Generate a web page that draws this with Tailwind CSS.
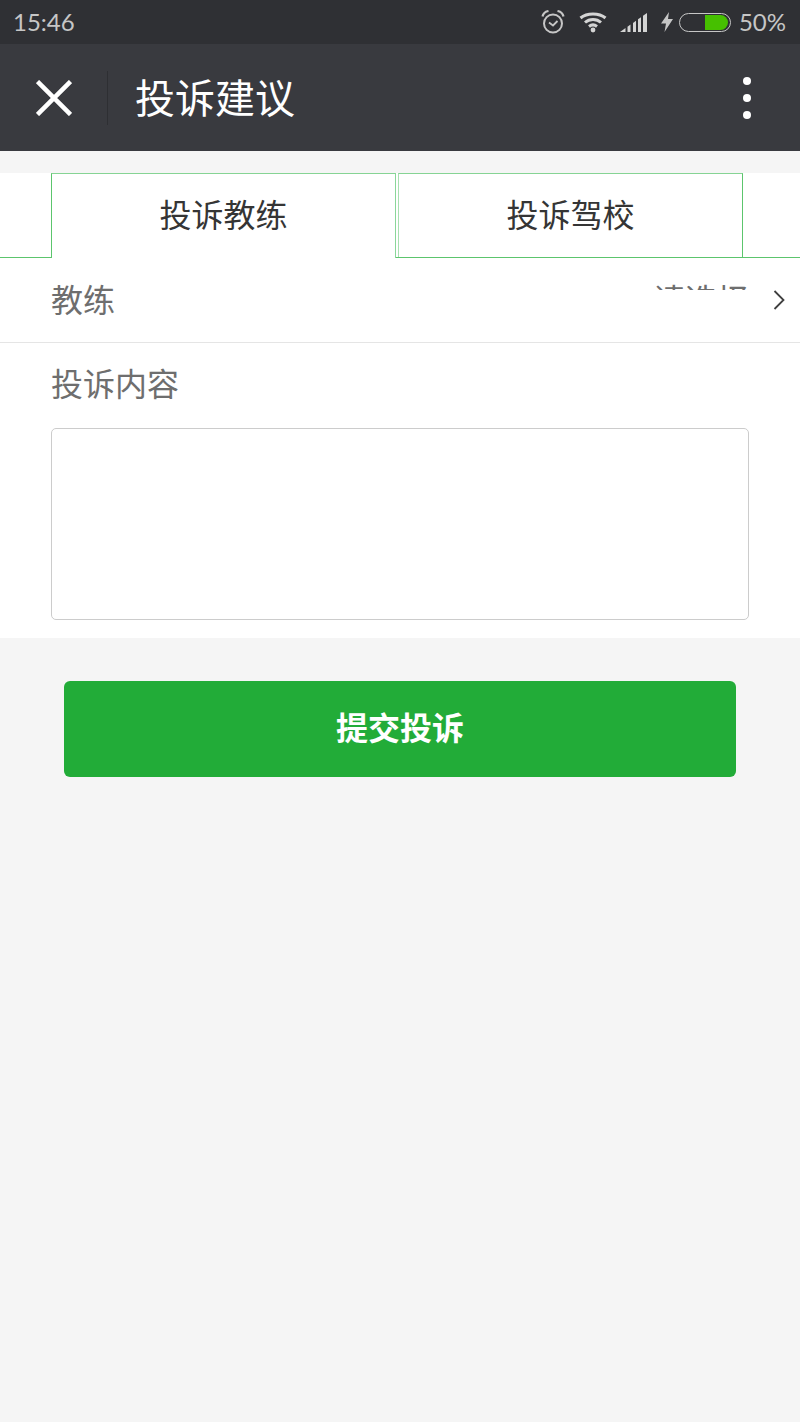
<!DOCTYPE html>
<html lang="zh">
<head>
<meta charset="utf-8">
<script src="https://cdn.jsdelivr.net/npm/@tailwindcss/browser@4"></script>
</head>
<body class="m-0 h-[1422px] w-[800px] overflow-hidden bg-[#f5f5f5] font-['Noto_Sans_CJK_SC','Noto_Sans',sans-serif]">
<div class="flex h-[44px] items-center justify-between bg-[#2f3034] pl-[13px] pr-[14px] font-['Lato','Noto_Sans_CJK_SC',sans-serif] text-[24px] leading-none text-[#c6c6c6]">
  <span>15:46</span>
  <div class="flex items-center">
    <svg class="h-[24px] w-[24px]" viewBox="0 0 24 24" fill="none" stroke="#c6c6c6" stroke-width="2"><circle cx="12" cy="13.500" r="9"/><path d="M8 12.500l4 3 4.500-4.500" stroke-width="1.800"/><path d="M1.500 6.500Q2.500 2 7.500 1M22.500 6.500Q21.500 2 16.500 1" stroke-width="2.200"/></svg>
    <svg class="ml-[14px] h-[24px] w-[28px]" viewBox="0 0 28 24" fill="none" stroke="#d4d4d4" stroke-width="3"><path d="M1.500 8C8 2.500 20 2.500 26.500 8"/><path d="M6 12.500C10.500 8.500 17.500 8.500 22 12.500"/><path d="M10 16.500C12.500 14.500 15.500 14.500 18 16.500"/><circle cx="14" cy="20" r="2.400" fill="#d4d4d4" stroke="none"/></svg>
    <svg class="ml-[13px] h-[19px] w-[27px]" viewBox="0 0 27 19" fill="#d4d4d4"><path d="M0 19L5.500 15.100V19zM7.500 13.700L10.500 11.600V19H7.500zM13 9.900L16 7.700V19H13zM18 6.300L21 4.200V19H18zM23 2.800L27 0V19H23z"/></svg>
    <svg class="ml-[14px] h-[20px] w-[12px]" viewBox="0 0 12 20" fill="#c6c6c6"><path d="M8 0L0 11.500H5L3.500 20 12 7H7z"/></svg>
    <div class="ml-[6px] flex h-[19px] w-[52px] justify-end rounded-full border-[1.5px] border-[#c6c6c6] py-[1px] pr-[2px]">
      <div class="w-[23px] rounded-r-full bg-[#46c000]"></div>
    </div>
    <span class="ml-[8px]">50%</span>
  </div>
</div>
<div class="flex h-[107px] items-center bg-[#393a3f] text-white">
  <svg class="ml-[36px] h-[36px] w-[36px]" viewBox="0 0 36 36" stroke="#fff" stroke-width="4.500"><path d="M1.500 1.500l33 33M34.500 1.500l-33 33"/></svg>
  <div class="ml-[35px] h-[54px] w-px bg-[#2e2f33]"></div>
  <span class="ml-[27px] pb-[4px] text-[40px] leading-none">投诉建议</span>
  <div class="ml-auto mr-[49px] flex flex-col gap-[9px]">
    <div class="h-[8px] w-[8px] rounded-full bg-white"></div>
    <div class="h-[8px] w-[8px] rounded-full bg-white"></div>
    <div class="h-[8px] w-[8px] rounded-full bg-white"></div>
  </div>
</div>
<div class="mt-[22px] h-[465px] bg-white">
  <div class="flex h-[85px] items-stretch border-b border-b-[#5cc56d] pl-[51px] text-[32px] leading-none text-[#353535]">
    <div class="relative -mb-px flex w-[345px] items-center justify-center border-x border-t border-l-[#5cc56d] border-r-[#8ad79a] border-t-[#86d494] bg-white pb-[6px]">投诉教练</div>
    <div class="ml-[2px] flex w-[345px] items-center justify-center border-x border-t border-l-[#a8e0b1] border-r-[#5cc56d] border-t-[#86d494] pb-[5px]">投诉驾校</div>
  </div>
  <div class="relative flex h-[85px] items-center border-b border-[#e5e5e5] pl-[51px] pr-[15px] text-[32px] leading-none text-[#6e6e6e]">
    <span class="pb-[4px]">教练</span>
    <div class="absolute right-[51px] top-[24px] h-[8px] overflow-hidden text-[32px] leading-none"><span class="block">请选择</span></div>
    <svg class="ml-auto h-[20px] w-[12px]" viewBox="0 0 12 20" fill="none" stroke="#3f3f3f" stroke-width="1.800"><path d="M1.500 1l9 9-9 9"/></svg>
  </div>
  <div class="px-[51px] pt-[23px] text-[32px] leading-none text-[#6e6e6e]">投诉内容</div>
  <div class="mx-[51px] mt-[30px] h-[192px] rounded-[5px] border border-[#cccccc] bg-white"></div>
</div>
<div class="mx-[64px] mt-[43px] flex h-[96px] items-center justify-center rounded-[6px] bg-[#22ac38] pb-[7px] text-[32px] font-bold leading-none text-white">提交投诉</div>
</body>
</html>
